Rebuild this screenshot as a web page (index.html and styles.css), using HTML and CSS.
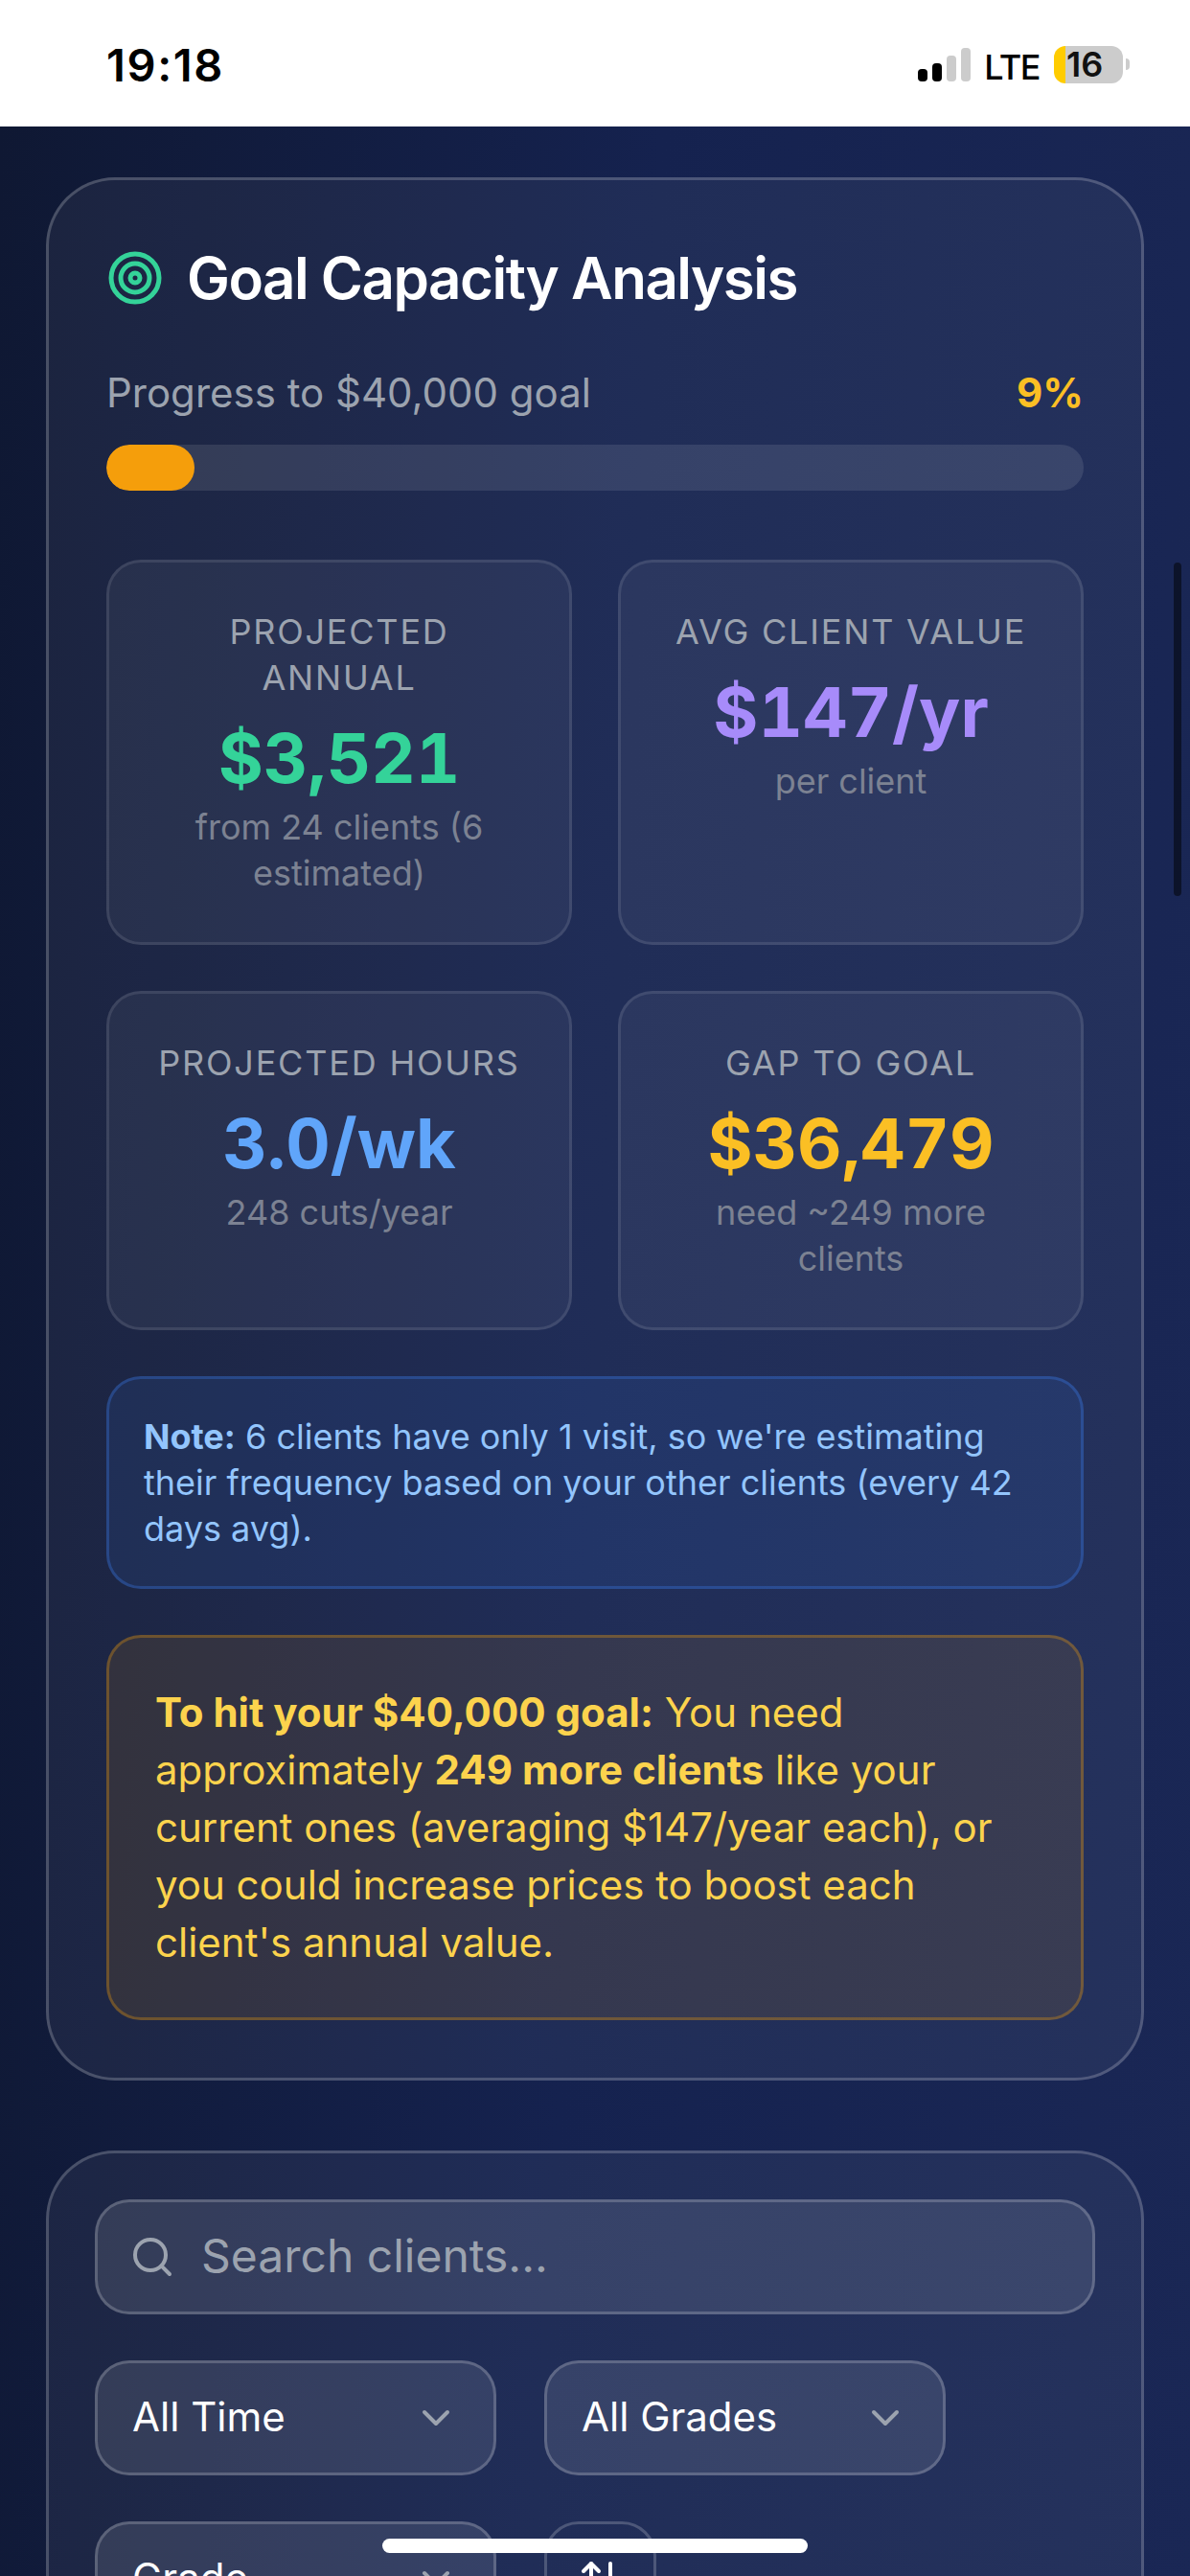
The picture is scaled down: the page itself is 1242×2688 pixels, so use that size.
FILE: index.html
```html
<!DOCTYPE html>
<html lang="en">
<head>
<meta charset="utf-8">
<title>Goal Capacity Analysis</title>
<link rel="stylesheet" href="styles.css">
</head>
<body>
<div class="screen">
  <header class="status">
    <span class="time">19:18</span>
    <div class="status-right">
      <svg class="signal" viewBox="0 0 55 35" width="55" height="35">
        <rect x="0" y="22" width="10" height="13" rx="4" fill="#000"/>
        <rect x="15" y="16" width="10" height="19" rx="4" fill="#000"/>
        <rect x="30" y="8" width="10" height="27" rx="4" fill="#ccc"/>
        <rect x="45" y="0" width="10" height="35" rx="4" fill="#ccc"/>
      </svg>
      <span class="lte">LTE</span>
      <div class="battery"><span class="battery-num">16</span></div>
    </div>
  </header>

  <main class="page">
    <section class="card goal">
      <h2 class="goal-title">
        <svg class="icon-target" viewBox="0 0 24 24" width="60" height="60" fill="none" stroke="#34d399" stroke-width="2">
          <circle cx="12" cy="12" r="10"/><circle cx="12" cy="12" r="6"/><circle cx="12" cy="12" r="2"/>
        </svg>
        <span>Goal Capacity Analysis</span>
      </h2>
      <div class="progress-row">
        <span>Progress to $40,000 goal</span>
        <span class="progress-pct">9%</span>
      </div>
      <div class="progress-track"><div class="progress-fill" style="width:9%"></div></div>

      <div class="tiles">
        <div class="tile">
          <div class="tile-label">Projected Annual</div>
          <div class="tile-value green">$3,521</div>
          <div class="tile-sub">from 24 clients (6 estimated)</div>
        </div>
        <div class="tile">
          <div class="tile-label">Avg Client Value</div>
          <div class="tile-value purple">$147/yr</div>
          <div class="tile-sub">per client</div>
        </div>
        <div class="tile">
          <div class="tile-label">Projected Hours</div>
          <div class="tile-value blue">3.0/wk</div>
          <div class="tile-sub">248 cuts/year</div>
        </div>
        <div class="tile">
          <div class="tile-label">Gap to Goal</div>
          <div class="tile-value amber">$36,479</div>
          <div class="tile-sub">need ~249 more clients</div>
        </div>
      </div>

      <div class="note"><strong>Note:</strong> 6 clients have only 1 visit, so we're estimating their frequency based on your other clients (every 42 days avg).</div>

      <div class="callout"><strong>To hit your $40,000 goal:</strong> You need approximately <strong>249 more clients</strong> like your current ones (averaging $147/year each), or you could increase prices to boost each client's annual value.</div>
    </section>

    <section class="card filters">
      <div class="search">
        <svg viewBox="0 0 24 24" width="48" height="48" fill="none" stroke="#9ca3af" stroke-width="2" stroke-linecap="round" stroke-linejoin="round">
          <circle cx="11" cy="11" r="8"/><path d="m21 21-4.3-4.3"/>
        </svg>
        <span class="field-text">Search clients...</span>
      </div>
      <div class="filter-row">
        <div class="select"><span class="field-text">All Time</span>
          <svg viewBox="0 0 24 24" width="48" height="48" fill="none" stroke="#9ca3af" stroke-width="2" stroke-linecap="round" stroke-linejoin="round"><path d="m6 9 6 6 6-6"/></svg>
        </div>
        <div class="select"><span class="field-text">All Grades</span>
          <svg viewBox="0 0 24 24" width="48" height="48" fill="none" stroke="#9ca3af" stroke-width="2" stroke-linecap="round" stroke-linejoin="round"><path d="m6 9 6 6 6-6"/></svg>
        </div>
        <div class="select"><span class="field-text">Grade</span>
          <svg viewBox="0 0 24 24" width="48" height="48" fill="none" stroke="#9ca3af" stroke-width="2" stroke-linecap="round" stroke-linejoin="round"><path d="m6 9 6 6 6-6"/></svg>
        </div>
        <div class="sort-btn">
          <svg viewBox="0 0 24 24" width="48" height="48" fill="none" stroke="#fff" stroke-width="2" stroke-linecap="round" stroke-linejoin="round"><path d="m21 16-4 4-4-4"/><path d="M17 20V4"/><path d="m3 8 4-4 4 4"/><path d="M7 4v16"/></svg>
        </div>
      </div>
    </section>
  </main>

  <div class="scrollbar"></div>
  <div class="home-indicator"></div>
</div>
</body>
</html>
```
FILE: styles.css
```css
* { box-sizing: border-box; }
html, body { margin: 0; padding: 0; }
body {
  width: 1242px;
  height: 2688px;
  overflow: hidden;
  font-family: Inter, "Liberation Sans", sans-serif;
  color: #fff;
  background: #0f172a;
}
.screen {
  position: relative;
  width: 1242px;
  height: 2688px;
  overflow: hidden;
  display: flex;
  flex-direction: column;
}

/* Status bar */
.status {
  flex: none;
  height: 132px;
  background: #fff;
  color: #000;
  display: flex;
  align-items: flex-start;
  justify-content: space-between;
  padding: 38px 70px 0 111px;
}
.time {
  font-size: 47px;
  line-height: 60px;
  font-weight: 600;
  letter-spacing: 1.6px;
}
.status-right {
  display: flex;
  align-items: flex-start;
  padding-top: 10px;
}
.signal { display: block; margin: 2px 0 0 0; }
.lte {
  font-size: 36px;
  line-height: 44px;
  font-weight: 500;
  letter-spacing: -1.5px;
  margin-left: 14px;
  margin-top: 0;
}
.battery {
  position: relative;
  width: 72px;
  height: 39px;
  margin-left: 15px;
  border-radius: 12px;
  background: linear-gradient(90deg, #ffcc00 0, #ffcc00 12px, #ccc 12px, #ccc 100%);
  display: flex;
  align-items: center;
  padding-left: 13px;
}
.battery::after {
  content: "";
  position: absolute;
  left: 75px;
  top: 13px;
  width: 4px;
  height: 12px;
  border-radius: 0 6px 6px 0;
  background: #ccc;
}
.battery-num {
  font-size: 36px;
  line-height: 39px;
  font-weight: 600;
  color: #111;
}

/* Page */
.page {
  flex: 1;
  padding: 53px 48px 0;
  display: flex;
  flex-direction: column;
  gap: 73px;
  background: linear-gradient(93deg, #0f1833 0%, #15224f 50%, #1a2755 100%);
}
.card {
  flex: none;
  border: 3px solid rgba(255, 255, 255, 0.2);
  border-radius: 72px;
  background: rgba(255, 255, 255, 0.05);
}
.goal { padding: 60px; }
.filters { padding: 48px; }

.goal-title {
  margin: 0 0 48px;
  display: flex;
  align-items: center;
  gap: 24px;
  font-size: 60px;
  line-height: 84px;
  font-weight: 600;
  letter-spacing: -1.5px;
}
.icon-target { flex: none; }
.progress-row {
  display: flex;
  justify-content: space-between;
  font-size: 42px;
  line-height: 60px;
  color: #9ca3af;
  margin-bottom: 24px;
}
.progress-pct { color: #fbbf24; font-weight: 700; }
.progress-track {
  height: 48px;
  border-radius: 24px;
  background: rgba(255, 255, 255, 0.1);
  overflow: hidden;
  margin-bottom: 72px;
}
.progress-fill {
  height: 100%;
  border-radius: 24px;
  background: #f59e0b;
}

.tiles {
  display: grid;
  grid-template-columns: 1fr 1fr;
  gap: 48px;
  margin-bottom: 48px;
}
.tile {
  padding: 48px;
  border: 3px solid rgba(255, 255, 255, 0.1);
  border-radius: 36px;
  background: rgba(255, 255, 255, 0.05);
  text-align: center;
}
.tile-label {
  font-size: 36px;
  line-height: 48px;
  color: #9ca3af;
  text-transform: uppercase;
  letter-spacing: 1.8px;
  margin-bottom: 12px;
}
.tile-value {
  font-size: 72px;
  line-height: 96px;
  font-weight: 700;
  font-variant-numeric: tabular-nums;
}
.tile-sub {
  font-size: 36px;
  line-height: 48px;
  color: #7c8292;
}
.green { color: #34d399; }
.purple { color: #a78bfa; }
.blue { color: #60a5fa; }
.amber { color: #fbbf24; }

.note {
  padding: 36px;
  margin-bottom: 48px;
  border: 3px solid rgba(59, 130, 246, 0.3);
  border-radius: 36px;
  background: rgba(59, 130, 246, 0.1);
  font-size: 36px;
  line-height: 48px;
  color: #93c5fd;
}
.note strong { font-weight: 700; }

.callout {
  padding: 48px;
  border: 3px solid rgba(245, 158, 11, 0.3);
  border-radius: 36px;
  background: rgba(245, 158, 11, 0.1);
  font-size: 42px;
  line-height: 60px;
  color: #fcd34d;
}
.callout strong { font-weight: 700; }

/* Filters */
.search {
  height: 120px;
  display: flex;
  align-items: center;
  gap: 27px;
  padding: 0 33px;
  margin-bottom: 48px;
  border: 3px solid rgba(255, 255, 255, 0.2);
  border-radius: 36px;
  background: rgba(255, 255, 255, 0.1);
  font-size: 48px;
  color: #9ca3af;
}
.field-text { margin-bottom: 3px; }
.filter-row {
  display: flex;
  flex-wrap: wrap;
  gap: 48px 50px;
}
.select {
  width: 419px;
  height: 120px;
  display: flex;
  align-items: center;
  justify-content: space-between;
  padding: 0 36px;
  border: 3px solid rgba(255, 255, 255, 0.2);
  border-radius: 36px;
  background: rgba(255, 255, 255, 0.1);
  font-size: 42px;
}
.sort-btn {
  width: 117px;
  height: 120px;
  display: flex;
  align-items: center;
  justify-content: center;
  border: 3px solid rgba(255, 255, 255, 0.2);
  border-radius: 36px;
}

/* Overlays */
.scrollbar {
  position: absolute;
  left: 1225px;
  top: 587px;
  width: 8px;
  height: 348px;
  border-radius: 4px;
  background: rgba(0, 0, 0, 0.5);
}
.home-indicator {
  position: absolute;
  left: 399px;
  top: 2649px;
  width: 444px;
  height: 15px;
  border-radius: 8px;
  background: #fff;
}
```
